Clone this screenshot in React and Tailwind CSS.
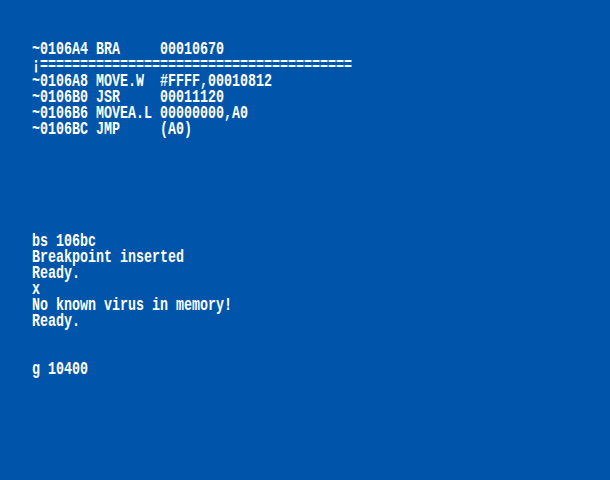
import React from 'react';

const lines = [
  '~0106A4 BRA     00010670',
  '¡=======================================',
  '~0106A8 MOVE.W  #FFFF,00010812',
  '~0106B0 JSR     00011120',
  '~0106B6 MOVEA.L 00000000,A0',
  '~0106BC JMP     (A0)',
  '',
  '',
  '',
  '',
  '',
  '',
  'bs 106bc',
  'Breakpoint inserted',
  'Ready.',
  'x',
  'No known virus in memory!',
  'Ready.',
  '',
  '',
  'g 10400',
];

const App = () => {
  return (
    <div className="w-[610px] h-[480px] bg-[#0055aa] text-white pt-[40px] pl-[32px] overflow-hidden">
      <div className="font-['Liberation_Mono',monospace] font-bold text-[13.333px]">
        {lines.map((line, i) => (
          <div key={i} className="h-4 flex items-center whitespace-pre">
            {line && (
              <span className="inline-block leading-[11px] scale-y-[1.4] translate-y-[1px]">{line}</span>
            )}
          </div>
        ))}
      </div>
    </div>
  );
};

export default App;
